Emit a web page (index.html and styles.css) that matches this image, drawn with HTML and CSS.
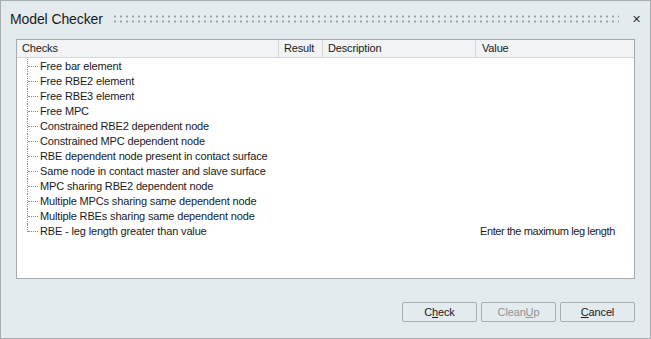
FILE: index.html
```html
<!DOCTYPE html>
<html lang="en">
<head>
  <meta charset="UTF-8" />
  <title>Model Checker</title>
  <link rel="stylesheet" href="styles.css">
</head>
<body>

<div class="dialog">
  <div class="titlebar">
    <span class="title">Model Checker</span>
    <span class="grip"></span>
    <span class="close">&#x2715;</span>
  </div>

  <div class="list">
    <div class="list-head">
      <div class="col col-checks">Checks</div>
      <div class="col col-result">Result</div>
      <div class="col col-desc">Description</div>
      <div class="col col-value">Value</div>
    </div>
    <div class="list-body" id="rows"></div>
  </div>

  <div class="buttons">
    <button class="btn">C<u>h</u>eck</button>
    <button class="btn" disabled>Clean<u>U</u>p</button>
    <button class="btn"><u>C</u>ancel</button>
  </div>
</div>

<script>
const checks = [
  { name: 'Free bar element', value: '' },
  { name: 'Free RBE2 element', value: '' },
  { name: 'Free RBE3 element', value: '' },
  { name: 'Free MPC', value: '' },
  { name: 'Constrained RBE2 dependent node', value: '' },
  { name: 'Constrained MPC dependent node', value: '' },
  { name: 'RBE dependent node present in contact surface', value: '' },
  { name: 'Same node in contact master and slave surface', value: '' },
  { name: 'MPC sharing RBE2 dependent node', value: '' },
  { name: 'Multiple MPCs sharing same dependent node', value: '' },
  { name: 'Multiple RBEs sharing same dependent node', value: '' },
  { name: 'RBE - leg length greater than value', value: 'Enter the maximum leg length' }
];

const rows = document.getElementById('rows');
checks.forEach((c, i) => {
  const last = i === checks.length - 1 ? ' last' : '';
  rows.innerHTML += `
    <div class="row${last}">
      <div class="col col-checks"><span class="branch"></span>${c.name}</div>
      <div class="col col-result"></div>
      <div class="col col-desc"></div>
      <div class="col col-value">${c.value}</div>
    </div>`;
});
</script>
</body>
</html>
```

FILE: styles.css
```css
body {
  margin: 0;
  font-family: 'Liberation Sans', Arial, sans-serif;
  color: #1a1a1a;
}
.dialog {
  width: 651px;
  height: 339px;
  box-sizing: border-box;
  border: 1px solid #a8adb1;
  background: #e4ebee;
  display: flex;
  flex-direction: column;
}
.titlebar {
  display: flex;
  align-items: center;
  height: 36px;
  padding: 0 9px 0 9px;
}
.title {
  font-size: 14px;
  letter-spacing: -0.1px;
}
.grip {
  flex: 1;
  height: 10px;
  margin: 0 13px 0 9px;
  background-image: radial-gradient(circle, #979da1 1px, transparent 1.2px);
  background-size: 6px 5px;
  background-position: 0 0;
}
.close {
  font-size: 11px;
  color: #333;
}
.list {
  margin: 2px 15px 0 15px;
  height: 240px;
  box-sizing: border-box;
  border: 1px solid #a6aaad;
  background: #fff;
  font-size: 11px;
  letter-spacing: -0.15px;
}
.list-head {
  display: flex;
  height: 17px;
  background: #f1f3f4;
  border-bottom: 1px solid #d4d7d9;
}
.list-head .col {
  line-height: 17px;
  padding-left: 5px;
  border-right: 1px solid #d4d7d9;
}
.col-checks { width: 256px; }
.col-result { width: 38px; }
.col-desc { width: 147px; }
.col-value { flex: 1; }
.list-head .col-value { border-right: none; padding-left: 6px; }
.list-body {
  padding-top: 1px;
}
.row {
  display: flex;
  height: 15px;
  line-height: 15px;
}
.row .col {
  padding-left: 5px;
  white-space: nowrap;
}
.row .col-value {
  padding-left: 7px;
  letter-spacing: -0.4px;
}
.row .col-checks {
  display: flex;
  align-items: center;
  padding-left: 10px;
  width: 251px;
}
.branch {
  position: relative;
  width: 12px;
  height: 15px;
  margin-right: 1px;
}
.branch::before {
  content: '';
  position: absolute;
  left: 0;
  top: 0;
  height: 15px;
  border-left: 1px dotted #8a8a8a;
}
.branch::after {
  content: '';
  position: absolute;
  left: 1px;
  top: 7px;
  width: 10px;
  border-top: 1px dotted #8a8a8a;
}
.row.last .branch::before {
  height: 8px;
}
.buttons {
  display: flex;
  justify-content: flex-end;
  gap: 4px;
  margin: 23px 15px 0 0;
}
.btn {
  width: 75px;
  height: 20px;
  padding: 0;
  font-family: 'Liberation Sans', Arial, sans-serif;
  font-size: 11px;
  letter-spacing: -0.15px;
  color: #1a1a1a;
  background: #e4ebee;
  border: 1px solid #a8adb1;
  border-radius: 2px;
}
.btn:disabled {
  color: #8d9296;
}
```
